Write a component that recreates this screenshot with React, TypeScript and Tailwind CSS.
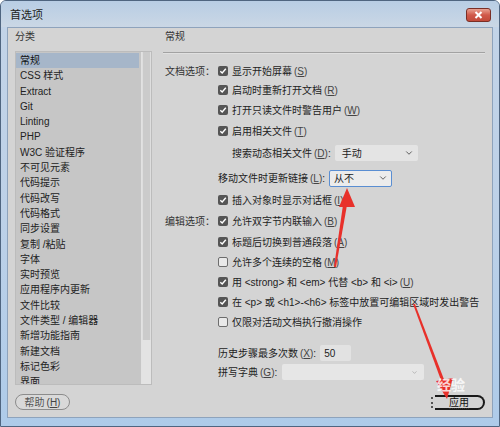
import { ChevronDown } from "lucide-react";

const CATEGORIES = [
  "常规",
  "CSS 样式",
  "Extract",
  "Git",
  "Linting",
  "PHP",
  "W3C 验证程序",
  "不可见元素",
  "代码提示",
  "代码改写",
  "代码格式",
  "同步设置",
  "复制 /粘贴",
  "字体",
  "实时预览",
  "应用程序内更新",
  "文件比较",
  "文件类型 / 编辑器",
  "新增功能指南",
  "新建文档",
  "标记色彩",
  "界面",
];

function Check({ on }: { on: boolean }) {
  if (!on) {
    return <span className="w-[10px] h-[10px] shrink-0 rounded-[2px] border border-[#6d6d6d] bg-[#e9e9e9]" />;
  }
  return (
    <span className="w-[10px] h-[10px] shrink-0 rounded-[2px] bg-[#555] flex items-center justify-center">
      <svg width="8" height="8" viewBox="0 0 8 8">
        <path d="M1.3 4.2 L3.2 6 L6.8 1.8" fill="none" stroke="#fff" strokeWidth="1.4" />
      </svg>
    </span>
  );
}

function Key({ k }: { k: string }) {
  return (
    <span className="ml-[2px] text-[#444]">
      (<u className="underline-offset-1">{k}</u>)
    </span>
  );
}

function Row({
  label,
  mt,
  children,
}: {
  label?: string;
  mt: string;
  children: React.ReactNode;
}) {
  return (
    <div className={`flex items-center h-[20px] ${mt}`}>
      <div className="w-[53px] shrink-0 text-right pr-[1px] text-[#333]">{label}</div>
      <div className="flex items-center pl-[2px] whitespace-nowrap">{children}</div>
    </div>
  );
}

function CheckRow({
  label,
  mt,
  on = true,
  children,
}: {
  label?: string;
  mt: string;
  on?: boolean;
  children: React.ReactNode;
}) {
  return (
    <Row label={label} mt={mt}>
      <Check on={on} />
      <span className="ml-[4px]">{children}</span>
    </Row>
  );
}

export default function App() {
  return (
    <div
      className="relative w-[500px] h-[427px] overflow-hidden flex flex-col rounded-t-[6px] border border-[#4f6580] bg-gradient-to-b from-[#c3d4e8] via-[#bdd1e8] to-[#aecbe9] text-[10px] text-[#222]"
      style={{ fontFamily: '"Liberation Sans", "Noto Sans CJK SC", sans-serif' }}
    >
      {/* title bar */}
      <div className="h-[26px] shrink-0 flex items-start justify-between pl-[9px] pr-[8px] bg-gradient-to-b from-[#b8cde4] to-[#cad7e5]">
        <span className="mt-[6px] text-[11px] text-[#1d1d1d]">首选项</span>
        <div className="mt-[7px] w-[25px] h-[14px] rounded-[3px] border border-[#7a2f26] bg-gradient-to-b from-[#e8a192] via-[#d0594a] to-[#c24a3a] flex items-center justify-center">
          <svg width="9" height="8" viewBox="0 0 9 8">
            <path d="M1.5 1 L7.5 7 M7.5 1 L1.5 7" stroke="#fff" strokeWidth="2" />
          </svg>
        </div>
      </div>

      {/* dialog body */}
      <div className="flex-1 mx-[6px] mb-[8px] border border-[#8ea3bc] bg-[#d4d4d4] flex">
        {/* category column */}
        <div className="w-[144px] shrink-0 pl-[7px] pt-[2px] flex flex-col">
          <div className="h-[14px] leading-[14px] text-[#333]">分类</div>
          <div className="mt-[7px] h-[334px] flex border border-[#bcbcbc]">
            <div className="w-[126px] bg-[#c6c6c6] pt-[1px] overflow-hidden">
              {CATEGORIES.map((c, i) => (
                <div
                  key={c}
                  className={`h-[15.3px] leading-[15.3px] pl-[4px] mr-[2px] ${
                    i === 0 ? "bg-[#a6b6c9] text-[#111]" : "text-[#222]"
                  }`}
                >
                  {c}
                </div>
              ))}
            </div>
            <div className="w-[10px] flex flex-col border-l border-[#e2e2e2]">
              <div className="h-[288px] bg-[#cbcbcb] border-x border-[#dedede]" />
              <div className="flex-1 bg-[#e3e3e3]" />
            </div>
          </div>
          <div className="mt-[9px] w-[55px] h-[16px] rounded-full border border-[#8c8c8c] bg-[#d9d9d9] flex items-center justify-center text-[#555]">
            帮助 <Key k="H" />
          </div>
        </div>

        {/* general panel */}
        <div className="w-[322px] ml-[11px] pt-[2px] flex flex-col">
          <div className="h-[14px] leading-[14px] pl-[2px] text-[#333]">常规</div>
          <div className="mt-[8px] h-[2px] bg-[#a2a2a2] border-b border-[#e0e0e0]" />

          <CheckRow label="文档选项：" mt="mt-[7px]">
            显示开始屏幕<Key k="S" />
          </CheckRow>
          <CheckRow mt="mt-[-1px]">
            启动时重新打开文档<Key k="R" />
          </CheckRow>
          <CheckRow mt="mt-0">
            打开只读文件时警告用户<Key k="W" />
          </CheckRow>
          <CheckRow mt="mt-[1px]">
            启用相关文件<Key k="T" />
          </CheckRow>
          <Row mt="mt-[2px]">
            <span className="ml-[14px]">
              搜索动态相关文件<Key k="D" />:
            </span>
            <div className="ml-[4px] w-[83px] h-[16px] bg-[#e4e4e4] rounded-[2px] flex items-center justify-between pl-[7px] pr-[4px]">
              <span>手动</span>
              <ChevronDown size={10} strokeWidth={2} color="#444" />
            </div>
          </Row>
          <Row mt="mt-[5px]">
            <span>
              移动文件时更新链接<Key k="L" />:
            </span>
            <div className="ml-[4px] w-[63px] h-[17px] bg-[#ececec] border border-[#5a8ed2] rounded-[2px] flex items-center justify-between pl-[4px] pr-[3px]">
              <span>从不</span>
              <ChevronDown size={10} strokeWidth={2} color="#444" />
            </div>
          </Row>
          <CheckRow mt="mt-[2px]">
            插入对象时显示对话框<Key k="I" />
          </CheckRow>
          <CheckRow label="编辑选项：" mt="mt-[1px]">
            允许双字节内联输入<Key k="B" />
          </CheckRow>
          <CheckRow mt="mt-[1px]">
            标题后切换到普通段落<Key k="A" />
          </CheckRow>
          <CheckRow mt="mt-0" on={false}>
            允许多个连续的空格<Key k="M" />
          </CheckRow>
          <CheckRow mt="mt-0">
            用 &lt;strong&gt; 和 &lt;em&gt; 代替 &lt;b&gt; 和 &lt;i&gt;<Key k="U" />
          </CheckRow>
          <CheckRow mt="mt-0">
            在 &lt;p&gt; 或 &lt;h1&gt;-&lt;h6&gt; 标签中放置可编辑区域时发出警告
          </CheckRow>
          <CheckRow mt="mt-0" on={false}>
            仅限对活动文档执行撤消操作
          </CheckRow>
          <Row mt="mt-[11px]">
            <span>
              历史步骤最多次数<Key k="X" />:
            </span>
            <div className="ml-[4px] w-[31px] h-[16px] bg-[#e2e2e2] rounded-[2px] flex items-center pl-[4px]">
              50
            </div>
          </Row>
          <Row mt="mt-[-1px]">
            <span>
              拼写字典<Key k="G" />:
            </span>
            <div className="ml-[5px] w-[142px] h-[16px] bg-[#e6e6e6] rounded-[2px] flex items-center justify-end pr-[6px]">
              <ChevronDown size={7} strokeWidth={2} color="#999" />
            </div>
          </Row>

          <div className="mt-auto mb-[7px] self-end flex items-center">
            <div className="w-[4px] h-[11px] border-l-2 border-dotted border-[#555]" />
            <div className="w-[50px] h-[15px] rounded-r-full border-2 border-l-0 border-[#1a1a1a] flex items-center justify-center text-[#111]">
              <span className="border-b border-dotted border-[#333] leading-[11px]">应用</span>
            </div>
          </div>
        </div>
      </div>

      {/* annotations */}
      <svg className="absolute inset-0 pointer-events-none" width="500" height="427">
        <polygon points="333,266 342,204 346,204 335,266" fill="#e8302a" />
        <polygon points="346,187 338,206 354,206" fill="#e8302a" />
        <polygon points="412,303 441,382 444,381 414,303" fill="#e8302a" />
        <polygon points="446,398 435,380 452,377" fill="#e8302a" />
      </svg>
      <div className="absolute left-[436px] top-[374px] text-[14px] font-bold text-white/80 pointer-events-none">
        经验
      </div>
    </div>
  );
}
